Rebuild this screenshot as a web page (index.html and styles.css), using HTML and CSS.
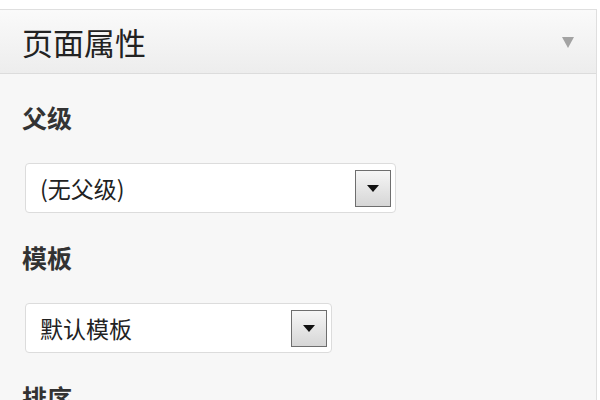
FILE: index.html
```html
<!DOCTYPE html>
<html lang="zh-CN">
<head>
    <meta charset="UTF-8" />
    <title>页面属性</title>
    <link rel="stylesheet" href="styles.css">
</head>
<body>
    <div class="postbox">
        <div class="postbox-header">
            <h3 class="postbox-title">页面属性</h3>
            <span class="handle-toggle" aria-label="切换面板">
                <svg viewBox="0 0 12 11" width="12" height="11"><path d="M0 0h12L6 11z" fill="#a3a3a3"/></svg>
            </span>
        </div>
        <div class="postbox-inside">
            <div class="field">
                <p class="field-label">父级</p>
                <div class="select-box select-parent">
                    <span class="select-value">(无父级)</span>
                    <span class="select-button">
                        <svg viewBox="0 0 12 7" width="12" height="7"><path d="M0 0h12L6 7z" fill="#111"/></svg>
                    </span>
                </div>
            </div>
            <div class="field">
                <p class="field-label">模板</p>
                <div class="select-box select-template">
                    <span class="select-value">默认模板</span>
                    <span class="select-button">
                        <svg viewBox="0 0 12 7" width="12" height="7"><path d="M0 0h12L6 7z" fill="#111"/></svg>
                    </span>
                </div>
            </div>
            <div class="field">
                <p class="field-label">排序</p>
            </div>
        </div>
    </div>
</body>
</html>
```

FILE: styles.css
```css
body {
    margin: 0;
    padding: 9px 0 0;
    background: #fff;
    font-family: "Noto Sans CJK SC", "Noto Sans", sans-serif;
    color: #2b2b2b;
    overflow: hidden;
}
.postbox {
    width: 596px;
    margin-left: -1px;
    border: 1px solid #dfdfdf;
    background: #f7f7f7;
    height: 420px;
}
.postbox-header {
    display: flex;
    align-items: center;
    justify-content: space-between;
    height: 63px;
    padding: 0 22px 0 22px;
    background: linear-gradient(to bottom, #fafafa, #ededed);
    border-bottom: 1px solid #dcdcdc;
}
.postbox-title {
    margin: 0;
    font-size: 31px;
    font-weight: normal;
    line-height: 40px;
    color: #222;
}
.handle-toggle {
    display: flex;
    margin-top: 2px;
}
.postbox-inside {
    padding: 28px 0 0 25px;
}
.field {
    margin-bottom: 29px;
}
.field-label {
    margin: 0 0 31px -3px;
    font-size: 25px;
    line-height: 30px;
    font-weight: bold;
    color: #333;
}
.select-box {
    display: flex;
    align-items: center;
    justify-content: space-between;
    box-sizing: border-box;
    height: 50px;
    padding: 0 4px 0 14px;
    background: #fff;
    border: 1px solid #dcdcdc;
    border-radius: 4px;
}
.select-parent {
    width: 371px;
}
.select-template {
    width: 307px;
}
.select-value {
    font-size: 23px;
    line-height: 30px;
    color: #222;
}
.select-button {
    display: flex;
    align-items: center;
    justify-content: center;
    box-sizing: border-box;
    width: 36px;
    height: 37px;
    border: 1px solid #6e6e6e;
    background: linear-gradient(to bottom, #f6f6f6, #d6d6d6);
}
```
